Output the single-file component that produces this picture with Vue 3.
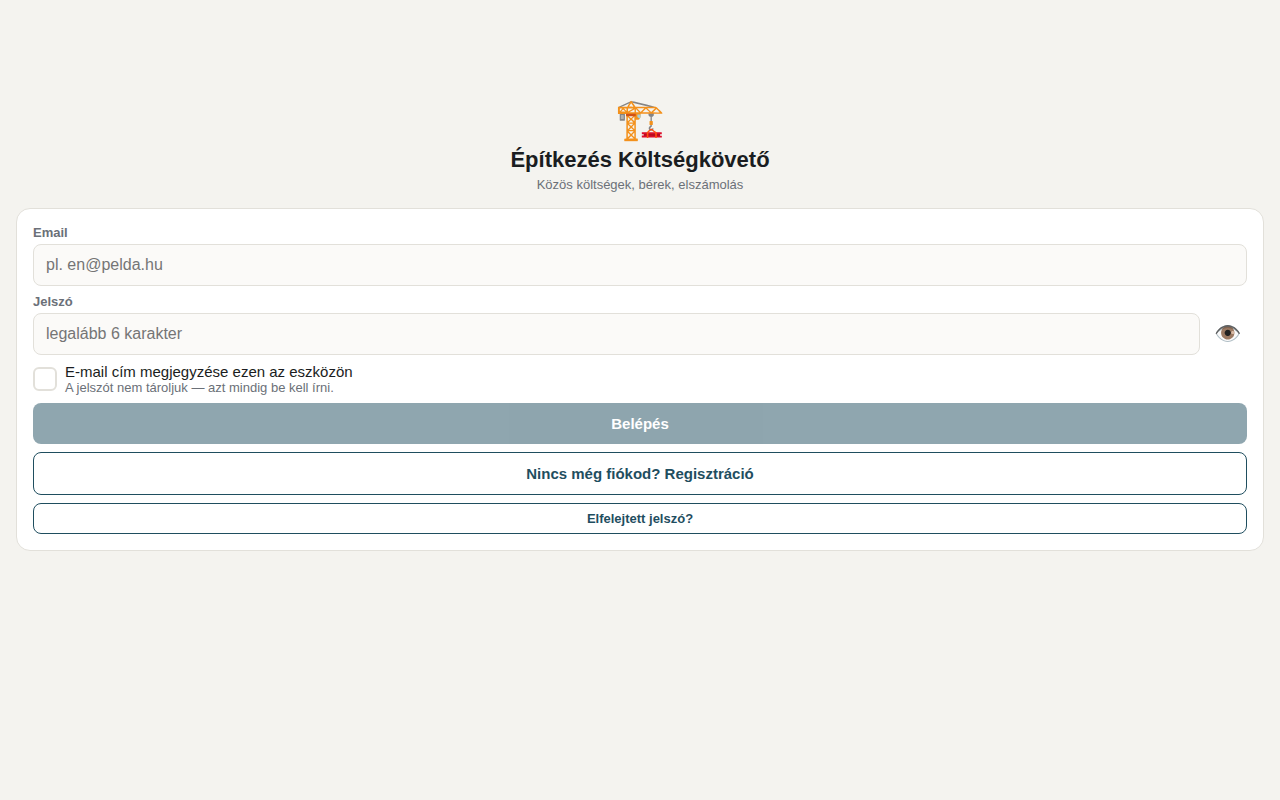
<script setup>
import { ref } from 'vue'

const email = ref('')
const password = ref('')
const visible = ref(false)
const remember = ref(false)
</script>

<template>
  <main class="page">
    <header class="hero">
      <div class="logo" aria-hidden="true">🏗️</div>
      <h1>Építkezés Költségkövető</h1>
      <p>Közös költségek, bérek, elszámolás</p>
    </header>
    <form class="card" @submit.prevent>
      <div class="field">
        <label for="email">Email</label>
        <input id="email" v-model="email" class="text" type="email" placeholder="pl. en@pelda.hu" />
      </div>
      <div class="field">
        <label for="password">Jelszó</label>
        <div class="row">
          <input id="password" v-model="password" class="text" :type="visible ? 'text' : 'password'" placeholder="legalább 6 karakter" />
          <button class="eye" type="button" aria-label="Jelszó megjelenítése" @click="visible = !visible">👁️</button>
        </div>
      </div>
      <label class="remember" for="remember">
        <input id="remember" v-model="remember" type="checkbox" />
        <span class="copy">
          <span class="title">E-mail cím megjegyzése ezen az eszközön</span>
          <span class="hint">A jelszót nem tároljuk — azt mindig be kell írni.</span>
        </span>
      </label>
      <button class="btn primary" type="submit" :disabled="!email || !password">Belépés</button>
      <button class="btn outline" type="button">Nincs még fiókod? Regisztráció</button>
      <button class="btn outline small" type="button">Elfelejtett jelszó?</button>
    </form>
  </main>
</template>

<style>
body {
  background: #f4f3ef;
}
</style>

<style scoped>
.page, .page * {
  box-sizing: border-box;
}
.page {
  padding: 94px 16px 16px;
  font-family: "Liberation Sans", Arial, sans-serif;
  color: #1a1d21;
}
.hero {
  display: flex;
  flex-direction: column;
  align-items: center;
  gap: 4px;
  text-align: center;
}
.logo {
  font-size: 40px;
  line-height: 50px;
}
h1 {
  margin: 0;
  font-size: 22px;
  line-height: 24px;
}
p {
  margin: 0;
  font-size: 13px;
  line-height: 18px;
  color: #6b7078;
}
.card {
  display: flex;
  flex-direction: column;
  gap: 8px;
  margin-top: 14px;
  padding: 16px;
  background: #fff;
  border: 1px solid #e2e0da;
  border-radius: 14px;
}
.field {
  display: flex;
  flex-direction: column;
  gap: 4px;
}
.field label {
  font-size: 13px;
  font-weight: 700;
  line-height: 15px;
  color: #6b7078;
}
.text {
  flex: 1;
  width: 100%;
  min-width: 0;
  padding: 11px 12px;
  border: 1px solid #e2e0da;
  border-radius: 8px;
  background: #fbfaf8;
  font: 16px/18px "Liberation Sans", Arial, sans-serif;
  color: #1a1d21;
}
.text::placeholder {
  color: #757575;
}
.row {
  display: flex;
  align-items: center;
  gap: 8px;
}
.eye {
  padding: 4px 6px;
  border: 0;
  background: none;
  font: 22px/26px "Liberation Sans", Arial, sans-serif;
}
.remember {
  display: flex;
  align-items: center;
  gap: 8px;
}
.remember input {
  appearance: none;
  width: 24px;
  height: 24px;
  margin: 0;
  border: 2px solid #e2e0da;
  border-radius: 6px;
  background: #fff;
}
.remember input:checked {
  background: #1f4e5f;
}
.copy {
  display: flex;
  flex-direction: column;
}
.title {
  font-size: 15px;
  line-height: 17px;
}
.hint {
  font-size: 13px;
  line-height: 15px;
  color: #6b7078;
}
.btn {
  padding: 12px 16px;
  border: 0;
  border-radius: 8px;
  font: 700 15px/17px "Liberation Sans", Arial, sans-serif;
}
.primary {
  background: #1f4e5f;
  color: #fff;
}
.primary:disabled {
  opacity: 0.5;
}
.outline {
  border: 1px solid #1f4e5f;
  background: #fff;
  color: #1f4e5f;
}
.small {
  padding: 7px 12px;
  font-size: 13px;
  line-height: 15px;
}
</style>
